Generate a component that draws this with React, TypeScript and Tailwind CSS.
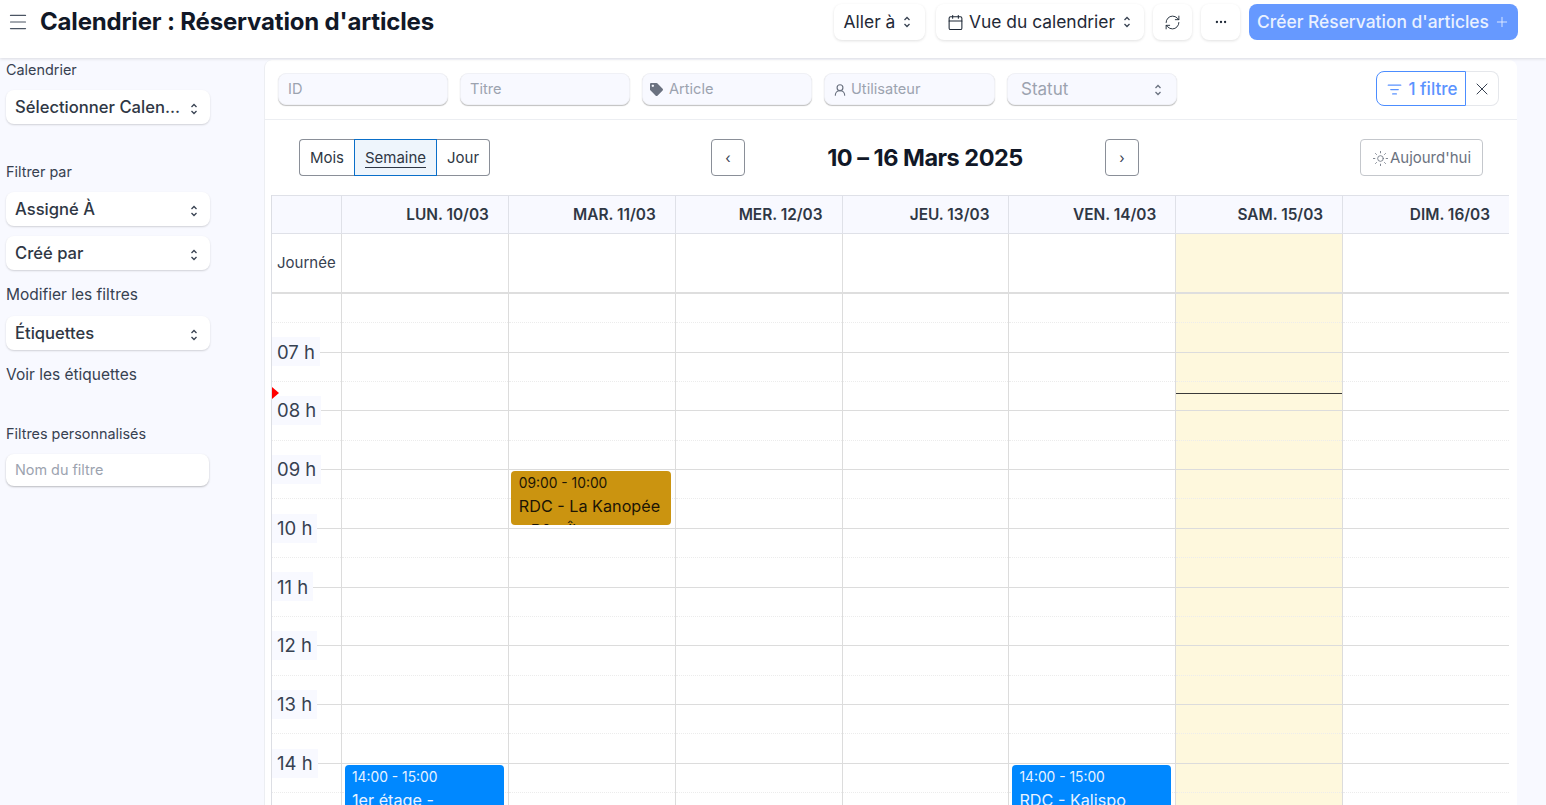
import type { ReactNode } from "react";
import { Calendar, Ellipsis, ListFilter, Menu, Plus, RefreshCw, Sun, UserRound, X } from "lucide-react";
import { FaTag } from "react-icons/fa";

const hours = [6, 7, 8, 9, 10, 11, 12, 13, 14, 15];

const days = ["LUN. 10/03", "MAR. 11/03", "MER. 12/03", "JEU. 13/03", "VEN. 14/03", "SAM. 15/03", "DIM. 16/03"];

type CalEvent = { day: number; time: string; lines: string[]; top: string; bg: string; fg: string };

const events: CalEvent[] = [
  { day: 0, time: "14:00 - 15:00", lines: ["1er étage -", "Salle"], top: "top-[471px]", bg: "bg-[#0088ff]", fg: "text-[#e8f3ff]" },
  { day: 1, time: "09:00 - 10:00", lines: ["RDC - La Kanopée", "- R0 - Îlot"], top: "top-[177px]", bg: "bg-[#cb9410]", fg: "text-[#1c1505]" },
  { day: 4, time: "14:00 - 15:00", lines: ["RDC - Kalispo", "Salle"], top: "top-[471px]", bg: "bg-[#0088ff]", fg: "text-[#e8f3ff]" },
];

function UpDown({ className = "text-[#374151]" }: { className?: string }) {
  return (
    <svg width="8" height="14" viewBox="0 0 8 14" fill="none" stroke="currentColor" strokeWidth="1.3" className={className}>
      <path d="M1.5 5 L4 2.5 L6.5 5" />
      <path d="M1.5 9 L4 11.5 L6.5 9" />
    </svg>
  );
}

function TopButton({ children, className = "" }: { children: ReactNode; className?: string }) {
  return (
    <button className={`h-9 flex items-center justify-center bg-white rounded-lg shadow-[0_1px_3px_rgba(0,0,0,0.12)] text-[17.4px] text-[#1f2937] ${className}`}>
      {children}
    </button>
  );
}

function SideSelect({ label }: { label: string }) {
  return (
    <div className="w-[204px] h-[34px] flex items-center justify-between pl-[9px] pr-[12px] bg-white rounded-lg shadow-[0_1px_2px_rgba(0,0,0,0.16)] text-[16.6px] font-medium text-[#2f3744]">
      <span className="pt-[1px]">{label}</span>
      <UpDown className="text-[#374151] mt-[3px]" />
    </div>
  );
}

function FilterBox({ children, className = "" }: { children: ReactNode; className?: string }) {
  return (
    <div className={`w-[170px] h-8 flex items-center pt-[2px] bg-[#f8f9ff] rounded-lg shadow-[0_1px_1px_rgba(0,0,0,0.25)] border border-[#f0f1f6] text-[14.6px] text-[#9ca3af] ${className}`}>
      {children}
    </div>
  );
}

function Sidebar() {
  return (
    <aside className="w-[264px] shrink-0 pl-[6px] pt-[1px] text-[14.4px] text-[#374151]">
      <div className="h-[17px] leading-[17px]">Calendrier</div>
      <div className="mt-[12px]"><SideSelect label="Sélectionner Calen..." /></div>
      <div className="mt-[39px] h-[17px] leading-[17px]">Filtrer par</div>
      <div className="mt-[12px]"><SideSelect label="Assigné À" /></div>
      <div className="mt-[10px]"><SideSelect label="Créé par" /></div>
      <div className="mt-[16px] h-[17px] leading-[17px] text-[15.5px]">Modifier les filtres</div>
      <div className="mt-[13px]"><SideSelect label="Étiquettes" /></div>
      <div className="mt-[16px] h-[17px] leading-[17px] text-[15.5px]">Voir les étiquettes</div>
      <div className="mt-[42px] h-[17px] leading-[17px]">Filtres personnalisés</div>
      <div className="mt-[12px] w-[203px] h-8 flex items-center pl-[9px] bg-white rounded-lg shadow-[0_1px_2px_rgba(0,0,0,0.25)] text-[#9ca3af]">
        Nom du filtre
      </div>
    </aside>
  );
}

function FilterRow() {
  return (
    <div className="h-[60px] shrink-0 flex items-center border-b border-[#eceef2] pl-[13px] pr-[18px] pb-[2px] gap-3">
      <FilterBox className="pl-[9px]">ID</FilterBox>
      <FilterBox className="pl-[9px]">Titre</FilterBox>
      <FilterBox className="pl-[7px]">
        <FaTag size={13} className="text-[#6b7280] mr-[6px]" />
        Article
      </FilterBox>
      <FilterBox className="w-[171px] pl-[8px]">
        <UserRound size={14} className="text-[#6b7280] mr-[4px]" />
        Utilisateur
      </FilterBox>
      <FilterBox className="pl-[13px] pr-[14px] justify-between text-[17px]">
        Statut
        <UpDown className="text-[#6b7280]" />
      </FilterBox>
      <div className="ml-auto flex items-center h-[35px]">
        <div className="w-[90px] h-[35px] flex items-center justify-center gap-[7px] pl-[2px] pt-[2px] rounded-l-lg border border-[#4c8dff] text-[#5b93ff] text-[17px] font-medium">
          <ListFilter size={15} />
          1 filtre
        </div>
        <div className="w-[33px] h-[35px] flex items-center justify-center rounded-r-lg border border-l-0 border-[#e5e7eb] text-[#374151]">
          <X size={20} strokeWidth={1.2} />
        </div>
      </div>
    </div>
  );
}

function Toolbar() {
  return (
    <div className="h-[75px] shrink-0 flex items-start pt-[19px] pl-[34px] pr-[34px]">
      <div className="flex h-[37px] text-[15px] text-[#2f3744]">
        <div className="w-[55px] flex items-center justify-center pt-[2px] border border-[#8a8f98] border-r-0 rounded-l">Mois</div>
        <div className="w-[83px] flex items-center justify-center border border-[#0a6fc9] bg-[#eef5fc]">
          <span className="border-b border-[#2f3744] leading-[19px]">Semaine</span>
        </div>
        <div className="w-[53px] flex items-center justify-center pt-[2px] border border-[#8a8f98] border-l-0 rounded-r">Jour</div>
      </div>
      <button className="ml-[221px] w-[34px] h-[37px] flex items-center justify-center border border-[#8a8f98] rounded text-[14px] text-[#374151]">‹</button>
      <div className="w-[360px] h-[37px] flex items-center justify-center text-[23.5px] font-bold tracking-[-0.5px] text-[#111827]">10 – 16 Mars 2025</div>
      <button className="w-[34px] h-[37px] flex items-center justify-center border border-[#8a8f98] rounded text-[14px] text-[#374151]">›</button>
      <button className="ml-auto w-[123px] h-[37px] flex items-center justify-center gap-px pt-[1px] border border-[#c4c7cc] rounded text-[15px] text-[#6b7280]">
        <Sun size={17} strokeWidth={1.2} />
        Aujourd'hui
      </button>
    </div>
  );
}

function HourCell() {
  return (
    <div className="h-[58.75px] flex flex-col border-b border-[#dcdcdc]">
      <div className="h-[29.4px] shrink-0 border-b border-dotted border-[#ececec]" />
    </div>
  );
}

function CalendarGrid() {
  return (
    <div className="ml-[6px] w-[1238px] grid grid-cols-[69px_repeat(7,1fr)] border-l border-[#dcdee4] text-[#374151]">
      <div className="h-[39px] bg-[#f8f9ff] border-y border-[#dfe1e8]" />
      {days.map((d) => (
        <div key={d} className="h-[39px] flex items-center justify-end pr-[19px] bg-[#f8f9ff] border-y border-l border-[#dfe1e8] text-[15.4px] font-semibold text-[#2f3744]">
          {d}
        </div>
      ))}
      <div className="h-[59.75px] flex items-center pl-[5px] border-b-2 border-[#dedede] text-[15px]">Journée</div>
      {days.map((d, i) => (
        <div key={d} className={`h-[59.75px] border-b-2 border-l border-[#dedede] ${i === 5 ? "bg-[#fef8dd]" : ""}`} />
      ))}
      <div className="relative">
        {hours.map((h) => (
          <HourCell key={h} />
        ))}
        {hours.slice(1).map((h, i) => (
          <div
            key={h}
            className="absolute left-0 h-[29px] flex items-center px-[5px] bg-[#f8f9ff] text-[18.5px] leading-none text-[#374151]"
            style={{ top: 43.5 + i * 58.75 }}
          >
            {String(h).padStart(2, "0")} h
          </div>
        ))}
        <div className="absolute left-0 top-[93px] w-0 h-0 border-y-[6px] border-y-transparent border-l-[7px] border-l-[#ff0000]" />
      </div>
      {days.map((d, i) => (
        <div key={d} className={`relative border-l border-[#dcdcdc] ${i === 5 ? "bg-[#fef8dd]" : ""}`}>
          {hours.map((h) => (
            <HourCell key={h} />
          ))}
          {i === 5 && <div className="absolute left-0 right-0 top-[99px] h-px bg-[#3a3a3a]" />}
          {events
            .filter((e) => e.day === i)
            .map((e) => (
              <div key={e.time} className={`absolute left-[2.5px] right-[4px] h-[54px] ${e.top} ${e.bg} ${e.fg} rounded overflow-hidden pl-[7.5px] pt-[4px]`}>
                <div className="text-[13.8px] leading-[17px]">{e.time}</div>
                <div className="mt-[2px] text-[16.2px] leading-[24px]">
                  {e.lines.map((l) => (
                    <div key={l}>{l}</div>
                  ))}
                </div>
              </div>
            ))}
        </div>
      ))}
    </div>
  );
}

export default function App() {
  return (
    <div className="h-screen w-full overflow-hidden flex flex-col bg-[#f8f9ff] font-['Inter',sans-serif]">
      <header className="h-[58px] shrink-0 flex items-start bg-white shadow-[0_1px_3px_rgba(0,0,0,0.12)] z-10 pl-[9px] pr-[28px]">
        <div className="h-[44px] flex items-center">
          <Menu size={18} strokeWidth={1.3} className="text-[#4b5563] scale-125" />
          <h1 className="ml-[13px] text-[24px] font-bold tracking-[-0.17px] text-[#111827]">Calendrier : Réservation d'articles</h1>
        </div>
        <div className="ml-auto flex items-center gap-[9px] pt-[4px]">
          <TopButton className="w-[91px] gap-2 mr-[2px] pr-[4px]">Aller à <UpDown /></TopButton>
          <TopButton className="w-[208px] gap-[5px] pr-[2px]">
            <Calendar size={17} strokeWidth={1.5} />
            Vue du calendrier
            <UpDown className="ml-[3px] text-[#374151]" />
          </TopButton>
          <TopButton className="w-[39px]"><RefreshCw size={17} strokeWidth={1.3} /></TopButton>
          <TopButton className="w-[39px]"><Ellipsis size={14} /></TopButton>
          <button className="w-[269px] h-9 flex items-center justify-center gap-[5px] rounded-lg bg-[#6699ff] text-[17.4px] font-medium text-[#eaf1ff]">
            Créer Réservation d'articles
            <Plus size={16} strokeWidth={1.3} />
          </button>
        </div>
      </header>
      <div className="flex-1 min-h-0 flex pt-[2px]">
        <Sidebar />
        <main className="w-[1253px] flex flex-col min-h-0 overflow-hidden bg-white border-l border-[#eceef2] rounded-t-lg">
          <FilterRow />
          <Toolbar />
          <CalendarGrid />
        </main>
      </div>
    </div>
  );
}
